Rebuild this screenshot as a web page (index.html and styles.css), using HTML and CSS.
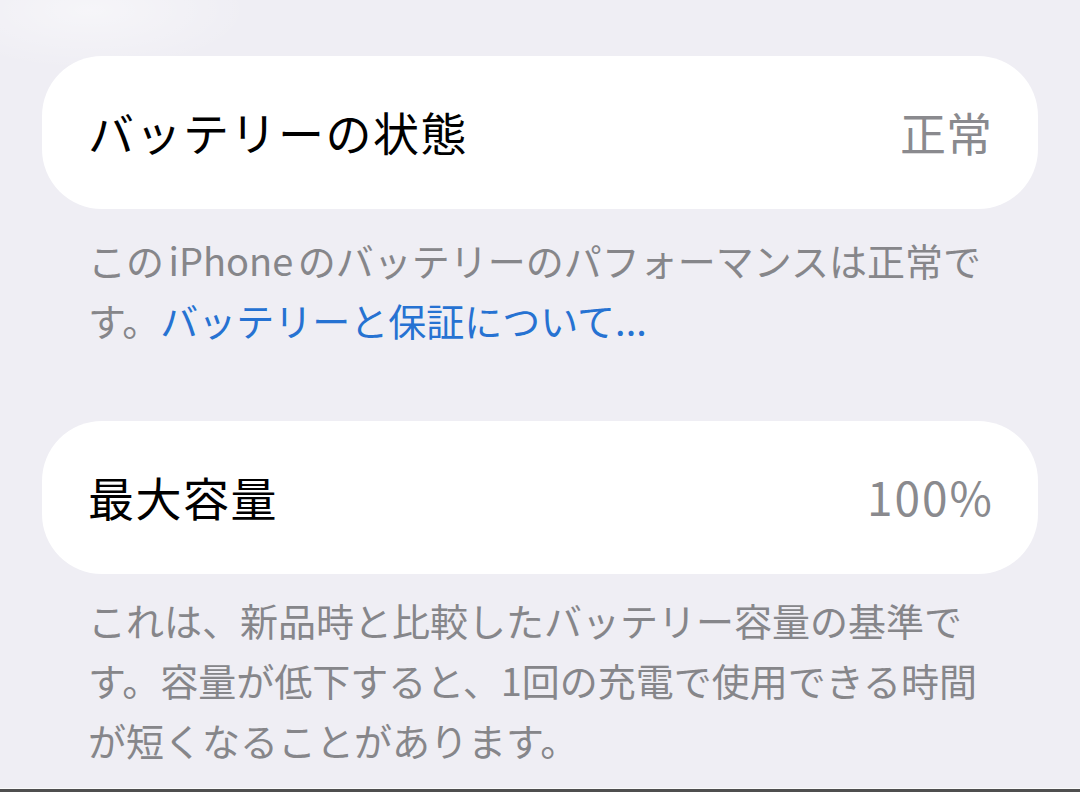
FILE: index.html
```html
<!DOCTYPE html>
<html lang="ja">
<head>
    <meta charset="UTF-8">
    <meta name="viewport" content="width=device-width, initial-scale=1.0">
    <title>バッテリーの状態</title>
    <link rel="stylesheet" href="styles.css">
</head>
<body>
    <div class="page">
        <section class="group first">
            <div class="cell">
                <span class="label">バッテリーの状態</span>
                <span class="value">正常</span>
            </div>
            <p class="footer">この iPhone のバッテリーのパフォーマンスは正常です。<a class="link" href="#">バッテリーと保証について...</a></p>
        </section>

        <section class="group second">
            <div class="cell">
                <span class="label">最大容量</span>
                <span class="value number">100%</span>
            </div>
            <p class="footer">これは、新品時と比較したバッテリー容量の基準です。容量が低下すると、1回の充電で使用できる時間が短くなることがあります。</p>
        </section>

        <div class="edge"></div>
    </div>
</body>
</html>
```

FILE: styles.css
```css
html, body {
    margin: 0;
    padding: 0;
}
body {
    font-family: "Noto Sans CJK JP", "Noto Sans", sans-serif;
    background: #efeef4;
}
.page {
    height: 792px;
    display: flex;
    flex-direction: column;
    padding: 0 42px;
    box-sizing: border-box;
    background: radial-gradient(ellipse 160px 60px at 90px 10px, rgba(255, 255, 255, 0.45), rgba(255, 255, 255, 0));
}
.group.first {
    margin-top: 56px;
}
.group.second {
    margin-top: 71px;
}
.cell {
    height: 153px;
    background: #fff;
    border-radius: 60px;
    padding: 0 46px;
    display: flex;
    align-items: center;
    justify-content: space-between;
}
.label {
    font-size: 46px;
    color: #000;
    letter-spacing: 1.5px;
    margin-top: -4px;
}
.value {
    font-size: 46px;
    color: #8a8a8e;
    margin-top: -4px;
}
.value.number {
    letter-spacing: 2px;
    margin-right: -2px;
}
.footer {
    margin: 0;
    padding: 21px 46px 0;
    font-size: 38px;
    line-height: 60px;
    color: #86868a;
    word-spacing: -4px;
}
.second .footer {
    padding-top: 16px;
}
.link {
    color: #2672d2;
    text-decoration: none;
}
.edge {
    margin: auto -42px 0;
    height: 3px;
    border-top: 1px solid #fafafa;
    background: #4f4f4f;
}
```
